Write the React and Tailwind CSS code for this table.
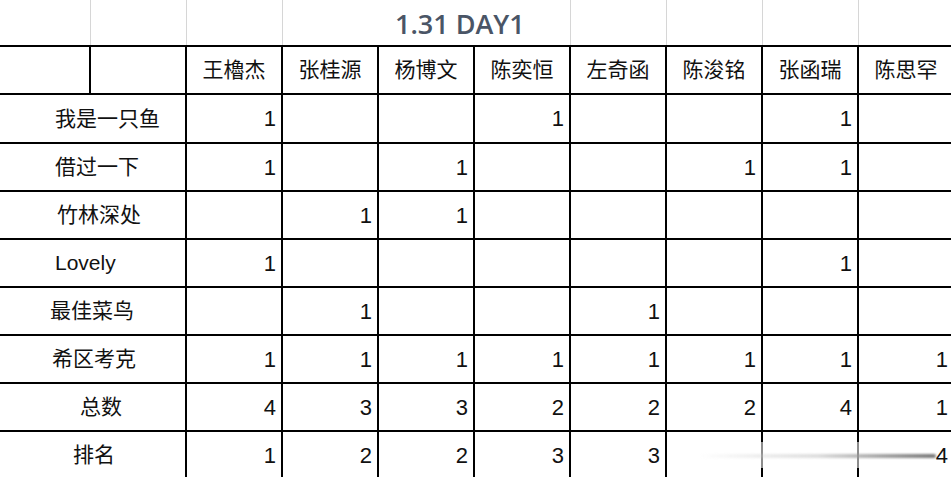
import React from "react";

const names = ["王櫓杰", "张桂源", "杨博文", "陈奕恒", "左奇函", "陈浚铭", "张函瑞", "陈思罕"];

const rows = [
  { label: "我是一只鱼", pl: "pl-[55px]", h: "h-[49px]", vals: [1, "", "", 1, "", "", 1, ""] },
  { label: "借过一下", pl: "pl-[55px]", h: "h-[48px]", vals: [1, "", 1, "", "", 1, 1, ""] },
  { label: "竹林深处", pl: "pl-[57px]", h: "h-[48px]", vals: ["", 1, 1, "", "", "", "", ""] },
  { label: "Lovely", pl: "pl-[55px]", h: "h-[48px]", vals: [1, "", "", "", "", "", 1, ""] },
  { label: "最佳菜鸟", pl: "pl-[50px]", h: "h-[48px]", vals: ["", 1, "", "", 1, "", "", ""] },
  { label: "希区考克", pl: "pl-[52px]", h: "h-[48px]", vals: [1, 1, 1, 1, 1, 1, 1, 1] },
  { label: "总数", pl: "pl-[80px]", h: "h-[48px]", vals: [4, 3, 3, 2, 2, 2, 4, 1] },
  { label: "排名", pl: "pl-[73px]", h: "h-[48px]", vals: [1, 2, 2, 3, 3, "", "", 4] },
];

const App = () => {
  return (
    <div
      className="relative w-[951px] h-[477px] overflow-hidden bg-white text-[#111] text-[21px]"
      style={{ fontFamily: '"Liberation Sans", "Noto Sans CJK SC", sans-serif' }}
    >
      {/* title row */}
      <div className="flex h-[47px] border-b-2 border-black">
        <div className="w-[91px] shrink-0 border-r border-[#d6d6d6]" />
        <div className="w-[96px] shrink-0 border-r border-[#d6d6d6]" />
        <div className="w-[96px] shrink-0 border-r border-[#d6d6d6]" />
        <div className="w-[288px] shrink-0 border-r border-[#d6d6d6] flex items-center pl-[112px] pt-[2px]">
          <span
            className="text-[27px] font-semibold text-[#4a5566] leading-none whitespace-nowrap"
            style={{ fontFamily: '"Open Sans", sans-serif' }}
          >
            1.31 DAY1
          </span>
        </div>
        <div className="w-[96px] shrink-0 border-r border-[#d6d6d6]" />
        <div className="w-[96px] shrink-0 border-r border-[#d6d6d6]" />
        <div className="w-[96px] shrink-0 border-r border-[#d6d6d6]" />
        <div className="w-[96px] shrink-0" />
      </div>

      {/* header row */}
      <div className="flex h-[48px] border-b-2 border-black">
        <div className="w-[91px] shrink-0 border-r-2 border-black" />
        <div className="w-[96px] shrink-0 border-r-2 border-black" />
        {names.map((n) => (
          <div
            key={n}
            className="w-[96px] shrink-0 border-r-2 border-black flex items-center justify-center whitespace-nowrap"
          >
            {n}
          </div>
        ))}
      </div>

      {/* data rows */}
      {rows.map((r) => (
        <div key={r.label} className={`flex ${r.h} border-b-2 border-black`}>
          <div className={`w-[187px] shrink-0 border-r-2 border-black flex items-center whitespace-nowrap ${r.pl}`}>
            {r.label}
          </div>
          {r.vals.map((v, i) => (
            <div
              key={i}
              className="w-[96px] shrink-0 border-r-2 border-black flex items-center justify-end pr-[5px] text-[22px]"
            >
              {v}
            </div>
          ))}
        </div>
      ))}

      {/* watermark over bottom right */}
      <div className="absolute left-[700px] top-[442px] w-[232px] h-[26px] bg-white/55" />
      <div className="absolute left-[700px] top-[454px] w-[236px] h-[4px] rounded-full bg-linear-to-r from-white/0 via-[#c8c8c8]/60 to-[#555]/80 blur-[1px]" />
    </div>
  );
};

export default App;
